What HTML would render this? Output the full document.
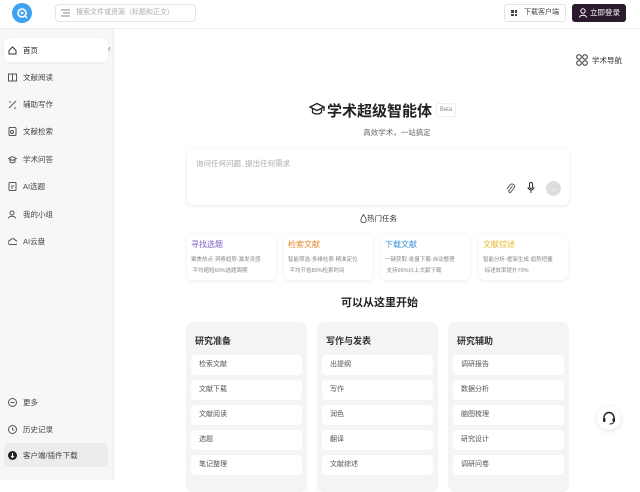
<!DOCTYPE html>
<html><head><meta charset="utf-8"><style>
*{margin:0;padding:0;box-sizing:border-box}
body{width:640px;height:480px;overflow:hidden;background:#fff;font-family:"Liberation Sans","Noto Sans CJK SC",sans-serif;color:#333;position:relative}
.abs{position:absolute}
.top{left:0;top:0;width:640px;height:29px;border-bottom:1px solid #eee;background:#fff}
.side{left:0;top:29px;width:114px;height:451px;background:#f7f7f8;border-right:1px solid #eee}
.si{position:absolute;left:4px;width:104px;height:24px;font-size:7.5px;color:#444;display:flex;align-items:center;padding-left:4px}
.si svg{margin-right:6px}
.card{position:absolute;top:234px;width:89px;height:46px;border-radius:6px;background:#fff;box-shadow:0 1px 4px rgba(0,0,0,.08);padding:5px 4px}
.card b{font-weight:normal;font-size:8px;display:block}
.card p{font-size:5.5px;color:#888;margin-top:5px;line-height:11px}
.col{position:absolute;top:322px;width:121px;height:170px;background:#f4f4f5;border-radius:7px}
.col h4{font-size:9px;font-weight:bold;color:#333;position:absolute;left:9px;top:12px}
.it{position:absolute;left:5px;width:111px;height:20px;background:#fff;border-radius:4px;font-size:7px;color:#555;padding-left:8px;line-height:20px}
</style></head><body>
<div class="abs top"></div>
<div class="abs" style="left:12px;top:3px;width:20px;height:20px;border-radius:50%;background:#3ea2f0"></div>
<svg class="abs" style="left:15px;top:6px" width="14" height="14" viewBox="0 0 14 14"><circle cx="7" cy="7" r="4" fill="none" stroke="#fff" stroke-width="1.6"/><circle cx="7" cy="7" r="1.4" fill="#fff"/><path d="M10 10l2 2" stroke="#fff" stroke-width="1.5"/></svg>
<div class="abs" style="left:55px;top:4px;width:141px;height:18px;border:1px solid #e5e5e5;border-radius:4px;font-size:7px;color:#aaa;line-height:16px;padding-left:20px">搜索文件或资源（标题和正文）</div>
<svg class="abs" style="left:61px;top:9px" width="9" height="8"><path d="M0 1h9M2 4h7M0 7h9" stroke="#888" stroke-width="1"/></svg>
<div class="abs" style="left:504px;top:4px;width:62px;height:18px;border:1px solid #e3e3e3;border-radius:3px;font-size:7px;color:#444;line-height:16px;padding-left:19px">下载客户端</div>
<div class="abs" style="left:511px;top:10px;width:6px;height:6px;background:linear-gradient(#fff,#fff) 2.5px 0/1px 6px no-repeat,linear-gradient(#fff,#fff) 0 2.5px/6px 1px no-repeat,#444"></div>
<div class="abs" style="left:572px;top:4px;width:54px;height:18px;background:#2b1a2d;border-radius:3px;font-size:7.5px;color:#fff;line-height:18px;padding-left:18px">立即登录</div>
<svg class="abs" style="left:579px;top:8px" width="8" height="10"><circle cx="4" cy="3" r="2.2" fill="none" stroke="#fff"/><path d="M0.5 9.5c0-3 7-3 7 0" fill="none" stroke="#fff"/></svg>

<div class="abs side"></div>
<div class="si" style="top:38px;background:#fff;border-radius:5px;box-shadow:0 1px 3px rgba(0,0,0,.05);color:#222"><svg width="9" height="9"><path d="M1 4.5L4.5 1 8 4.5V8H1z" fill="none" stroke="#333"/></svg>首页</div>
<div class="abs" style="left:108px;top:44px;font-size:8px;color:#666">‹</div>
<div class="si" style="top:65px"><svg width="9" height="9"><rect x="0.5" y="1" width="8" height="7" fill="none" stroke="#555"/><path d="M4.5 1v7" stroke="#555"/></svg>文献阅读</div>
<div class="si" style="top:92px"><svg width="9" height="9"><path d="M1 8l7-7M1 2h2M6 8h2" stroke="#555"/></svg>辅助写作</div>
<div class="si" style="top:119px"><svg width="9" height="9"><rect x="1" y="0.5" width="7" height="8" rx="1" fill="none" stroke="#555"/><circle cx="4" cy="5" r="1.5" fill="none" stroke="#555"/></svg>文献检索</div>
<div class="si" style="top:147px"><svg width="9" height="9"><path d="M0.5 3.5L4.5 1.5 8.5 3.5 4.5 5.5zM2 4.5v2.5c1.5 1 3.5 1 5 0V4.5" fill="none" stroke="#555"/></svg>学术问答</div>
<div class="si" style="top:174px"><svg width="9" height="9"><rect x="1" y="0.5" width="7" height="8" rx="1" fill="none" stroke="#555"/><path d="M3 4h3M3 6h2" stroke="#555"/></svg>AI选题</div>
<div class="si" style="top:202px"><svg width="9" height="9"><circle cx="4" cy="3" r="2" fill="none" stroke="#555"/><path d="M0.5 8.5c0-3 7-3 7 0" fill="none" stroke="#555"/></svg>我的小组</div>
<div class="si" style="top:229px"><svg width="9" height="9"><path d="M2 7.5a2 2 0 0 1 0-4 3 3 0 0 1 5.5 0 2 2 0 0 1 0 4z" fill="none" stroke="#555"/></svg>AI云盘</div>
<div class="si" style="top:390px"><svg width="9" height="9"><circle cx="4.5" cy="4.5" r="4" fill="none" stroke="#555"/><path d="M2.5 4.5h4" stroke="#555"/></svg>更多</div>
<div class="si" style="top:417px"><svg width="9" height="9"><circle cx="4.5" cy="4.5" r="4" fill="none" stroke="#555"/><path d="M4.5 2.5v2l1.5 1" stroke="#555" fill="none"/></svg>历史记录</div>
<div class="si" style="top:443px;background:#ececee;border-radius:5px"><svg width="9" height="9"><circle cx="4.5" cy="4.5" r="4.5" fill="#222"/><path d="M4.5 2v4M3 5l1.5 1.5L6 5" stroke="#fff" fill="none"/></svg>客户端/插件下载</div>

<svg class="abs" style="left:576px;top:54px" width="12" height="12"><circle cx="3" cy="3" r="2.3" fill="none" stroke="#333"/><circle cx="9" cy="3" r="2.3" fill="none" stroke="#333"/><circle cx="3" cy="9" r="2.3" fill="none" stroke="#333"/><circle cx="9" cy="9" r="2.3" fill="none" stroke="#333"/></svg>
<div class="abs" style="left:592px;top:55px;font-size:7.5px;color:#333">学术导航</div>

<svg class="abs" style="left:309px;top:102px" width="16" height="15"><path d="M1 5l7-3.5L15 5 8 8.5zM3.5 6.5v4c2.5 2 6.5 2 9 0v-4M15 5v4" fill="none" stroke="#222" stroke-width="1.3"/></svg>
<div class="abs" style="left:327px;top:100px;font-size:15px;font-weight:bold;color:#222">学术超级智能体</div>
<div class="abs" style="left:436px;top:103px;width:20px;height:14px;border:1px solid #eee;border-radius:3px;font-size:6px;color:#888;text-align:center;line-height:12px;background:#fff">Beta</div>
<div class="abs" style="left:0;width:640px;padding-left:114px;top:127px;text-align:center;font-size:7.5px;color:#666"><span style="margin-left:40px">高效学术，一站搞定</span></div>

<div class="abs" style="left:187px;top:149px;width:382px;height:56px;border-radius:6px;box-shadow:0 1px 5px rgba(0,0,0,.1);background:#fff"></div>
<div class="abs" style="left:196px;top:158px;font-size:7.5px;color:#aaa">询问任何问题, 提出任何需求</div>
<svg class="abs" style="left:506px;top:183px" width="9" height="11"><path d="M6.5 3L3 7.5a1.2 1.2 0 0 0 2 1.5L8 5a2.5 2.5 0 0 0-4-3L1 6" fill="none" stroke="#555"/></svg>
<svg class="abs" style="left:527px;top:182px" width="8" height="12"><rect x="2.5" y="0.5" width="3" height="6" rx="1.5" fill="none" stroke="#333"/><path d="M1 5a3 3 0 0 0 6 0M4 8v3" fill="none" stroke="#333"/></svg>
<div class="abs" style="left:546px;top:181px;width:15px;height:15px;border-radius:50%;background:#ddd;color:#fff;font-size:8px;text-align:center;line-height:15px">→</div>

<svg class="abs" style="left:360px;top:214px" width="7" height="9"><path d="M3.5 0.5C2 3 0.8 4.5 0.8 6a2.7 2.7 0 0 0 5.4 0C6.2 4.5 5 3 3.5 0.5z" fill="none" stroke="#444" stroke-width="0.8"/></svg>
<div class="abs" style="left:367px;top:213px;font-size:7.5px;color:#333">热门任务</div>

<div class="card" style="left:187px"><b style="color:#7a5cc7">寻找选题</b><p>聚焦热点·洞察趋势·激发灵感<br>&nbsp;平均缩短60%选题周期</p></div>
<div class="card" style="left:284px"><b style="color:#e8872b">检索文献</b><p>智能筛选·多维检索·精准定位<br>&nbsp;平均节省80%检索时间</p></div>
<div class="card" style="left:381px"><b style="color:#3a8fd8">下载文献</b><p>一键获取·批量下载·自动整理<br>&nbsp;支持95%以上文献下载</p></div>
<div class="card" style="left:479px"><b style="color:#e8b62b">文献综述</b><p>智能分析·框架生成·趋势把握<br>&nbsp;综述效率提升70%</p></div>

<div class="abs" style="left:341px;top:294px;font-size:11px;font-weight:bold;color:#222">可以从这里开始</div>

<div class="col" style="left:186px"><h4>研究准备</h4>
<div class="it" style="top:33px">检索文献</div><div class="it" style="top:58px">文献下载</div><div class="it" style="top:83px">文献阅读</div><div class="it" style="top:108px">选题</div><div class="it" style="top:133px">笔记整理</div></div>
<div class="col" style="left:317px"><h4>写作与发表</h4>
<div class="it" style="top:33px">出提纲</div><div class="it" style="top:58px">写作</div><div class="it" style="top:83px">润色</div><div class="it" style="top:108px">翻译</div><div class="it" style="top:133px">文献综述</div></div>
<div class="col" style="left:448px"><h4>研究辅助</h4>
<div class="it" style="top:33px">调研报告</div><div class="it" style="top:58px">数据分析</div><div class="it" style="top:83px">脑图梳理</div><div class="it" style="top:108px">研究设计</div><div class="it" style="top:133px">调研问卷</div></div>

<div class="abs" style="left:597px;top:406px;width:24px;height:24px;border-radius:50%;background:#fff;box-shadow:0 1px 5px rgba(0,0,0,.12)"></div>
<svg class="abs" style="left:602px;top:411px" width="14" height="14"><path d="M2 8V6.5a5 5 0 0 1 10 0V8" fill="none" stroke="#222" stroke-width="1.4"/><rect x="1" y="7" width="2.5" height="4" rx="1" fill="#222"/><rect x="10.5" y="7" width="2.5" height="4" rx="1" fill="#222"/><path d="M11.5 11c0 1.5-2 2-4 2" fill="none" stroke="#222"/></svg>
</body></html>
